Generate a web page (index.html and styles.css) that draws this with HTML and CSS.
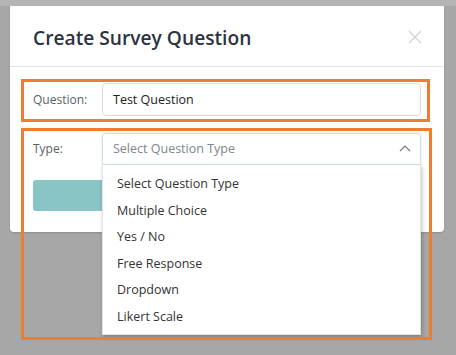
FILE: index.html
```html
<!DOCTYPE html>
<html>
<head>
<meta charset="utf-8">
<link rel="stylesheet" href="styles.css">
</head>
<body>
<div class="topbar"></div>
<div class="modal">
  <div class="modal-header">
    <h2 class="title">Create Survey Question</h2>
    <svg class="close" width="14" height="14" viewBox="0 0 14 14"><path d="M1 1 L13 13 M13 1 L1 13" stroke="#d3d3d3" stroke-width="1.4" fill="none"/></svg>
  </div>
  <div class="modal-body">
    <div class="row">
      <label class="label">Question:</label>
      <div class="input">Test Question</div>
    </div>
    <div class="row row-type">
      <label class="label">Type:</label>
      <div class="select-wrap">
        <div class="select">
          <span class="placeholder">Select Question Type</span>
          <svg class="chev" width="12" height="7" viewBox="0 0 12 7"><path d="M1 6 L6 1 L11 6" stroke="#7a7a7a" stroke-width="1.2" fill="none"/></svg>
        </div>
        <ul class="menu">
          <li>Select Question Type</li>
          <li>Multiple Choice</li>
          <li>Yes / No</li>
          <li>Free Response</li>
          <li>Dropdown</li>
          <li>Likert Scale</li>
        </ul>
      </div>
    </div>
    <div class="btn"></div>
  </div>
</div>
<div class="mark mark-q"></div>
<div class="mark mark-t"></div>
</body>
</html>
```
FILE: styles.css
```css
html, body {
  margin: 0;
  padding: 0;
}
body {
  width: 456px;
  height: 355px;
  overflow: hidden;
  background: #a7a7a8;
  font-family: "Open Sans", "Liberation Sans", sans-serif;
  position: relative;
}
.topbar {
  height: 6px;
  background: #b4b4b5;
}
.modal {
  margin-left: 10px;
  width: 434px;
  background: #fff;
  border-radius: 0 0 4px 4px;
  box-shadow: 0 1px 2px rgba(0,0,0,0.15);
}
.modal-header {
  height: 60px;
  border-bottom: 1px solid #e3e3e3;
  display: flex;
  align-items: center;
  justify-content: space-between;
  padding: 0 22px 0 23px;
}
.title {
  margin: 3px 0 0 0;
  font-size: 19.2px;
  font-weight: 600;
  color: #2c3341;
}
.close {
  margin-top: 1px;
}
.modal-body {
  padding: 16px 23px 21px 23px;
}
.row {
  display: flex;
  align-items: center;
}
.row-type {
  margin-top: 17px;
  align-items: flex-start;
}
.label {
  width: 69px;
  font-size: 12px;
  color: #5a5f66;
}
.row-type .label {
  margin-top: 7px;
}
.input {
  box-sizing: border-box;
  width: 319px;
  height: 33px;
  border: 1px solid #dcdcdc;
  border-radius: 4px;
  padding-left: 10px;
  display: flex;
  align-items: center;
  font-size: 12.5px;
  color: #222;
}
.select-wrap {
  position: relative;
}
.select {
  box-sizing: border-box;
  width: 319px;
  height: 32px;
  border: 1px solid #d3dfe2;
  border-radius: 4px 4px 0 0;
  box-shadow: 0 0 2px rgba(160,190,200,0.5);
  padding: 0 8px 0 10px;
  display: flex;
  align-items: center;
  justify-content: space-between;
  font-size: 12.5px;
  color: #80868b;
}
.placeholder {
  margin-top: -2px;
}
.chev {
  margin-right: 1px;
  margin-top: -2px;
}
.menu {
  position: absolute;
  top: 32px;
  left: 0;
  box-sizing: border-box;
  width: 319px;
  margin: 0;
  padding: 6px 0 3px 0;
  list-style: none;
  background: #fff;
  border: 1px solid #e4e4e4;
  border-top: none;
  box-shadow: 1px 2px 4px rgba(0,0,0,0.25);
  z-index: 2;
}
.menu li {
  height: 26.6px;
  line-height: 26.6px;
  padding-left: 14px;
  font-size: 12.5px;
  color: #333;
}
.btn {
  margin-top: 15px;
  width: 160px;
  height: 31px;
  border-radius: 3px;
  background: #89c5c5;
}
.mark {
  position: absolute;
  border: 3px solid #ef7d31;
  box-sizing: border-box;
  z-index: 3;
}
.mark-q {
  left: 21px;
  top: 79px;
  width: 409px;
  height: 43px;
}
.mark-t {
  left: 21px;
  top: 128px;
  width: 411px;
  height: 212px;
}
```
